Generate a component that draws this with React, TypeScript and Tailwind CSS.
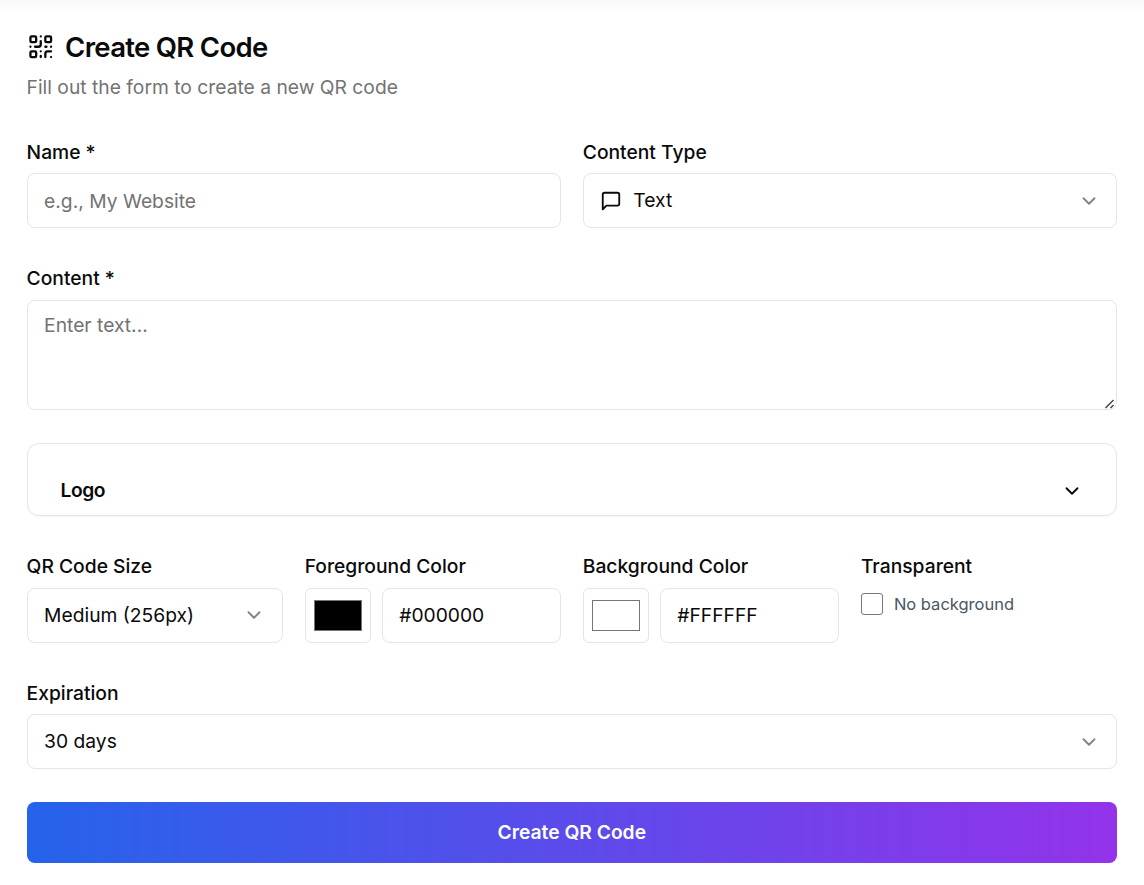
import { useState, type ReactNode } from "react";
import { ChevronDown, QrCode } from "lucide-react";

const fieldClass =
  "h-[55px] w-full min-w-0 rounded-lg border border-[#e5e5e5] bg-white px-[16.5px] text-[19.25px] text-[#0a0a0a] outline-none placeholder:text-[#737373]";

function MessageIcon() {
  return (
    <svg
      className="size-[22px]"
      viewBox="0 0 24 24"
      fill="none"
      stroke="currentColor"
      strokeWidth="2"
      strokeLinecap="round"
      strokeLinejoin="round"
    >
      <path d="M21 15a2 2 0 0 1-2 2H7l-4 4V5a2 2 0 0 1 2-2h14a2 2 0 0 1 2 2z" />
    </svg>
  );
}

function Field({ label, children }: { label: string; children: ReactNode }) {
  return (
    <div className="min-w-0">
      <label className="mb-[11px] block h-[27.5px] pt-[7px] text-[19.25px] leading-5 font-medium whitespace-nowrap">
        {label}
      </label>
      {children}
    </div>
  );
}

function SelectButton({ children }: { children: ReactNode }) {
  return (
    <button
      type="button"
      className="flex h-[55px] w-full items-center justify-between rounded-lg border border-[#e5e5e5] bg-white px-[16.5px] text-[19.25px]"
    >
      <span className="flex items-center gap-[11px]">{children}</span>
      <ChevronDown className="size-[22px] opacity-50" />
    </button>
  );
}

type ColorFieldProps = {
  label: string;
  value: string;
  swatchClass: string;
  onChange: (value: string) => void;
};

function ColorField({ label, value, swatchClass, onChange }: ColorFieldProps) {
  return (
    <Field label={label}>
      <div className="flex gap-[11px]">
        <button
          type="button"
          aria-label={label}
          className="h-[55px] w-[66px] shrink-0 rounded-md border border-[#e5e5e5] px-2 py-[11px]"
        >
          <span className={`block h-full w-full border border-[#767676] ${swatchClass}`} />
        </button>
        <input className={fieldClass} value={value} onChange={(e) => onChange(e.target.value)} />
      </div>
    </Field>
  );
}

export default function App() {
  const [name, setName] = useState("");
  const [content, setContent] = useState("");
  const [foreground, setForeground] = useState("#000000");
  const [background, setBackground] = useState("#FFFFFF");
  const [transparent, setTransparent] = useState(false);

  return (
    <main className="h-[885px] overflow-hidden bg-white font-['Inter',sans-serif] text-[#0a0a0a]">
      <div className="h-3 bg-gradient-to-b from-[#f8f8f8] to-white" />

      <div className="pt-[18px] pr-[27px] pl-[26.6px]">
        <header className="mb-[33px]">
          <h1 className="flex h-[34px] items-center gap-[11px] text-[27.5px] leading-none font-semibold tracking-tight">
            <QrCode className="size-[27.5px]" />
            <span className="pt-px">Create QR Code</span>
          </h1>
          <p className="mt-[9px] h-[28.5px] text-[19.25px] leading-[28px] text-[#737373]">
            Fill out the form to create a new QR code
          </p>
        </header>

        <form className="space-y-[33px]" onSubmit={(e) => e.preventDefault()}>
          <div className="grid grid-cols-2 gap-[22px]">
            <Field label="Name *">
              <input
                className={fieldClass}
                placeholder="e.g., My Website"
                value={name}
                onChange={(e) => setName(e.target.value)}
              />
            </Field>
            <Field label="Content Type">
              <SelectButton>
                <MessageIcon />
                Text
              </SelectButton>
            </Field>
          </div>

          <Field label="Content *">
            <div className="relative">
              <textarea
                className="block h-[110px] w-full resize-none rounded-lg border border-[#e5e5e5] px-[16.5px] py-[11px] text-[19.25px] leading-[27.5px] outline-none placeholder:text-[#737373]"
                placeholder="Enter text..."
                value={content}
                onChange={(e) => setContent(e.target.value)}
              />
              <svg
                className="absolute right-[2px] bottom-[1px] size-[10px]"
                viewBox="0 0 10 10"
                stroke="#404040"
                strokeWidth="1.4"
              >
                <path d="M0.5 9 8.5 1M5.5 9 8.5 6" fill="none" />
              </svg>
            </div>
          </Field>

          <section className="flex h-[73.5px] items-end justify-between rounded-xl border border-[#e5e5e5] px-[33px] pb-[11px] shadow-xs">
            <h2 className="text-[19.25px] leading-[27.5px] font-semibold tracking-tight">Logo</h2>
            <ChevronDown className="mb-[2.5px] size-[22px]" />
          </section>

          <div className="grid grid-cols-4 gap-[22px]">
            <Field label="QR Code Size">
              <SelectButton>Medium (256px)</SelectButton>
            </Field>
            <ColorField
              label="Foreground Color"
              value={foreground}
              swatchClass="bg-black"
              onChange={setForeground}
            />
            <ColorField
              label="Background Color"
              value={background}
              swatchClass="bg-white"
              onChange={setBackground}
            />
            <Field label="Transparent">
              <label className="mt-4 flex h-[22px] items-center gap-[11px]">
                <input
                  type="checkbox"
                  className="size-[22px] appearance-none rounded-[3px] border-[1.4px] border-[#767676] bg-white checked:bg-blue-600"
                  checked={transparent}
                  onChange={(e) => setTransparent(e.target.checked)}
                />
                <span className="pt-px text-[16.5px] text-[#4b5563]">No background</span>
              </label>
            </Field>
          </div>

          <Field label="Expiration">
            <SelectButton>30 days</SelectButton>
          </Field>

          <button
            type="submit"
            className="block h-[61px] w-full rounded-lg bg-linear-to-r/srgb from-[#2563eb] to-[#9333ea] text-[19.25px] font-semibold text-white"
          >
            Create QR Code
          </button>
        </form>
      </div>
    </main>
  );
}
